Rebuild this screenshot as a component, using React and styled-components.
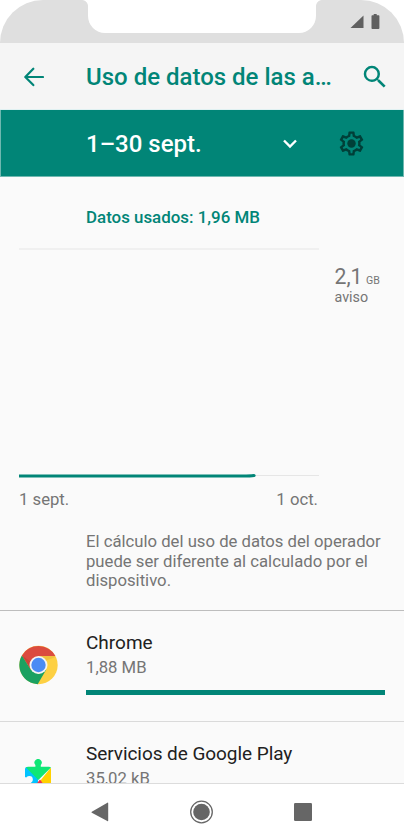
import React from "react";
import styled, { createGlobalStyle } from "styled-components";

const TEAL = "#018577";

const GlobalStyle = createGlobalStyle`
  * { box-sizing: border-box; }
  html, body { margin: 0; background: #fff; overflow: hidden; }
`;

const Screen = styled.div`
  width: 404px;
  height: 840px;
  display: flex;
  flex-direction: column;
  overflow: hidden;
  background: #fff;
  color: #757575;
  font-family: Roboto, "Liberation Sans", sans-serif;
  white-space: nowrap;
`;

const StatusBar = styled.header`
  position: relative;
  flex: none;
  height: 43px;
  background: #dfdfdf;
  border-radius: 43px 43px 0 0;
  display: flex;
  justify-content: flex-end;
  padding: 14px 23px 0 0;
`;

const Notch = styled.div`
  position: absolute;
  top: 0;
  left: 88px;
  width: 228px;
  height: 33px;
  background: #fff;
  border-radius: 0 0 17px 17px;
  &::before, &::after {
    content: "";
    position: absolute;
    top: 0;
    width: 6px;
    height: 6px;
  }
  &::before { left: -6px; background: radial-gradient(circle at 0 100%, transparent 5.5px, #fff 6.3px); }
  &::after { right: -6px; background: radial-gradient(circle at 100% 100%, transparent 5.5px, #fff 6.3px); }
`;

const Toolbar = styled.div`
  flex: none;
  height: 67px;
  background: #f5f5f5;
  border-bottom: 1px solid #e0f1f2;
  display: grid;
  grid-template-columns: 62px 274px 1fr;
  align-items: center;
  padding: 2px 0 0 24px;
`;

const Title = styled.h1`
  margin: 0;
  color: ${TEAL};
  font-size: 24px;
  line-height: 28px;
  font-weight: 500;
`;

const CycleBar = styled.div`
  flex: none;
  height: 67px;
  background: ${TEAL};
  border: solid #6fb8b0;
  border-width: 0 1px 1px;
  display: grid;
  grid-template-columns: 196px 55px 1fr;
  align-items: center;
  padding: 1px 0 0 85px;
  ${Title} { color: #fff; padding-top: 1px; }
`;

const Content = styled.main`
  flex: none;
  height: 607px;
  overflow: hidden;
  background: #fafafa;
  border-bottom: 1px solid #dcdcdc;
`;

const Used = styled.div`
  padding: 30px 0 0 86px;
  height: 71px;
  color: ${TEAL};
  font-size: 16.9px;
  line-height: 20px;
  font-weight: 500;
`;

const ChartArea = styled.section`
  display: flex;
  padding-left: 19px;
  height: 230px;
`;

const Plot = styled.div`
  width: 300px;
  height: 230px;
  border-top: 2px solid #f0f0f0;
  display: flex;
  flex-direction: column;
  justify-content: flex-end;
`;

const Warning = styled.div`
  padding: 16px 0 0 15.5px;
`;

const Amount = styled.div`
  display: flex;
  align-items: baseline;
  gap: 3.5px;
  font-size: 21.2px;
  line-height: 25px;
`;

const Unit = styled.span`
  font-size: 10.6px;
`;

const Notice = styled.div`
  margin-top: -4px;
  font-size: 14.3px;
  line-height: 17px;
`;

const Dates = styled.div`
  display: flex;
  justify-content: space-between;
  width: 318px;
  padding: 12px 0 0 19px;
  font-size: 16.7px;
  line-height: 20px;
`;

const Note = styled.p`
  margin: 0;
  padding: 22px 0 0 86px;
  height: 100px;
  font-size: 16.7px;
  line-height: 19.7px;
`;

const Row = styled.div`
  display: grid;
  grid-template-columns: 67px 299px;
  height: 111px;
  padding: 21px 0 0 19px;
  border-top: ${(p) => p.$line};
`;

const IconSlot = styled.div`
  padding-top: ${(p) => p.$top};
`;

const Name = styled.div`
  color: #212121;
  font-size: 19px;
  line-height: 22px;
  letter-spacing: ${(p) => p.$track || "normal"};
`;

const Size = styled.div`
  padding-top: 4px;
  font-size: 16.7px;
  line-height: 20px;
`;

const Bar = styled.div`
  height: 5px;
  margin-top: 12px;
  background: ${TEAL};
`;

const NavBar = styled.nav`
  flex: 1;
  display: flex;
  align-items: center;
  padding: 0 0 1px 91px;
  gap: 80px;
`;

const Icon = styled.svg`
  display: block;
  flex: none;
`;

const BackArrow = () => (
  <Icon width="20" height="20" viewBox="0 0 20 20" fill="none" stroke={TEAL} strokeWidth="2.2" strokeLinecap="round" strokeLinejoin="round">
    <path d="M19 10H1.4M9.3 1.7L1.3 10l8 8.1" />
  </Icon>
);

const Search = () => (
  <Icon width="30" height="30" viewBox="0 0 24 24" fill={TEAL}>
    <path d="M15.5 14h-.79l-.28-.27A6.471 6.471 0 0 0 16 9.5 6.5 6.5 0 1 0 9.5 16c1.61 0 3.09-.59 4.23-1.57l.27.28v.79l5 4.99L20.49 19l-4.99-5zm-6 0C7.01 14 5 11.99 5 9.5S7.01 5 9.5 5 14 7.01 14 9.5 11.99 14 9.5 14z" />
  </Icon>
);

const Gear = () => (
  <Icon width="29" height="29" viewBox="0 0 24 24" fill="#003f38">
    <path d="M19.43 12.98c.04-.32.07-.64.07-.98 0-.34-.03-.66-.07-.98l2.11-1.65c.19-.15.24-.42.12-.64l-2-3.46c-.09-.16-.26-.25-.44-.25-.06 0-.12.01-.17.03l-2.49 1c-.52-.4-1.08-.73-1.69-.98l-.38-2.65C14.46 2.18 14.25 2 14 2h-4c-.25 0-.46.18-.49.42l-.38 2.65c-.61.25-1.17.59-1.69.98l-2.49-1c-.06-.02-.12-.03-.18-.03-.17 0-.34.09-.43.25l-2 3.46c-.13.22-.07.49.12.64l2.11 1.65c-.04.32-.07.65-.07.98 0 .33.03.66.07.98l-2.11 1.65c-.19.15-.24.42-.12.64l2 3.46c.09.16.26.25.44.25.06 0 .12-.01.17-.03l2.49-1c.52.4 1.08.73 1.69.98l.38 2.65c.03.24.24.42.49.42h4c.25 0 .46-.18.49-.42l.38-2.65c.61-.25 1.17-.59 1.69-.98l2.49 1c.06.02.12.03.18.03.17 0 .34-.09.43-.25l2-3.46c.12-.22.07-.49-.12-.64l-2.11-1.65zm-1.98-1.71c.04.31.05.52.05.73 0 .21-.02.43-.05.73l-.14 1.13.89.7 1.08.84-.7 1.21-1.27-.51-1.04-.42-.9.68c-.43.32-.84.56-1.25.73l-1.06.43-.16 1.13-.2 1.35h-1.4l-.19-1.35-.16-1.13-1.06-.43c-.43-.18-.83-.41-1.23-.71l-.91-.7-1.06.43-1.27.51-.7-1.21 1.08-.84.89-.7-.14-1.13c-.03-.31-.05-.54-.05-.74s.02-.43.05-.73l.14-1.13-.89-.7-1.08-.84.7-1.21 1.27.51 1.04.42.9-.68c.43-.32.84-.56 1.25-.73l1.06-.43.16-1.13.2-1.35h1.39l.19 1.35.16 1.13 1.06.43c.43.18.83.41 1.23.71l.91.7 1.06-.43 1.27-.51.7 1.21-1.07.85-.89.7.14 1.13z" />
    <circle cx="12" cy="12" r="3.5" />
  </Icon>
);

const Chrome = () => (
  <Icon width="39" height="40" viewBox="-19.5 -20 39 40">
    <circle r="19.2" fill="#fdd043" />
    <path d="M-16.6 -9.6A19.2 19.2 0 0 1 16.9 -9L0 -9L-7.8 4.5Z" fill="#db4b3f" />
    <path d="M-16.6 -9.6A19.2 19.2 0 0 0 -.8 19.2L7.8 4.5L0 9L-7.8 4.5Z" fill="#1aa161" />
    <path d="M-16.6 -9.6L-7.8 4.5L-6 -2Z" fill="#b93d35" opacity=".5" />
    <path d="M0 -9H16.9L16 -7.6L6 -4Z" fill="#e8b83c" opacity=".6" />
    <circle r="9" fill="#f4f4f4" />
    <circle r="7.2" fill="#4b8bf4" />
  </Icon>
);

const PlayServices = () => (
  <Icon width="39" height="40" viewBox="0 0 39 40">
    <path d="M6 10q0-2 2-2L19 19 19 34H8q-2 0-2-2v-5a4 4 0 1 0 0-7z" fill="#00c3ff" />
    <path d="M32 8.4v24L21 22z" fill="#ffd100" />
    <path d="M7 8.4q1-.6 2-.6h7.4V6a3.6 3.6 0 1 1 5.4 0v1.8h8q1.4 0 2.2.6L19.3 21z" fill="#0fe676" />
    <path d="M10 34L21 20.5 31 34z" fill="#f0344b" />
    <circle cx="10.4" cy="20.4" r="3.4" fill="#fafafa" />
    <path d="M6 18q2 1 3 .2v4.8q-1 .7-3-.2z" fill="#fafafa" />
  </Icon>
);

export default function App() {
  return (
    <Screen>
      <GlobalStyle />
      <StatusBar>
        <Notch />
        <Icon width="31" height="16" viewBox="0 0 31 16" fill="#606060">
          <path d="M0.5 14L13.5 1.5V14z" />
          <path d="M24 0h3v1.2h2q.7 0 .7.7V14q0 .9-.9.9h-6.2q-.8 0-.8-.9V1.9q0-.7.7-.7H24z" transform="translate(-.3 0)" />
        </Icon>
      </StatusBar>
      <Toolbar>
        <BackArrow />
        <Title>Uso de datos de las a…</Title>
        <Search />
      </Toolbar>
      <CycleBar>
        <Title as="h2">1–30 sept.</Title>
        <Icon width="16" height="10" viewBox="0 0 16 10" fill="none" stroke="#fff" strokeWidth="2.4">
          <path d="M2 1.5L8 7.5L14 1.5" />
        </Icon>
        <Gear />
      </CycleBar>
      <Content>
        <Used>Datos usados: 1,96 MB</Used>
        <ChartArea>
          <Plot>
            <Icon width="300" height="6" viewBox="0 0 300 6" fill="none">
              <path d="M236 3.5H300" stroke="#e6e6e6" strokeWidth="1.2" />
              <path d="M0 4H223Q232 4 235 3.5" stroke={TEAL} strokeWidth="3.2" />
              <circle cx="235" cy="3.5" r="1.6" fill={TEAL} />
            </Icon>
          </Plot>
          <Warning>
            <Amount>2,1<Unit>GB</Unit></Amount>
            <Notice>aviso</Notice>
          </Warning>
        </ChartArea>
        <Dates><span>1 sept.</span><span>1 oct.</span></Dates>
        <Note>
          El cálculo del uso de datos del operador<br />
          puede ser diferente al calculado por el<br />
          dispositivo.
        </Note>
        <Row $line="1px solid #bdbdbd">
          <IconSlot $top="13px"><Chrome /></IconSlot>
          <div>
            <Name>Chrome</Name>
            <Size>1,88 MB</Size>
            <Bar />
          </div>
        </Row>
        <Row $line="1px solid #dadada">
          <IconSlot $top="16px"><PlayServices /></IconSlot>
          <div>
            <Name $track="-0.06px">Servicios de Google Play</Name>
            <Size>35,02 kB</Size>
          </div>
        </Row>
      </Content>
      <NavBar>
        <Icon width="18" height="20" viewBox="0 0 18 20" fill="#666">
          <path d="M16.4.7Q17.2.3 17.2 1.3V18.6q0 1-.9.5L.8 10.7q-.8-.5 0-1z" />
        </Icon>
        <Icon width="24" height="24" viewBox="0 0 24 24">
          <circle cx="12.5" cy="12" r="10.8" fill="none" stroke="#666" strokeWidth="1.3" />
          <circle cx="12.5" cy="12" r="8.3" fill="#666" />
        </Icon>
        <Icon width="20" height="20" viewBox="0 0 20 20">
          <rect x="1" y="1" width="18" height="18" rx="1.3" fill="#666" />
        </Icon>
      </NavBar>
    </Screen>
  );
}
